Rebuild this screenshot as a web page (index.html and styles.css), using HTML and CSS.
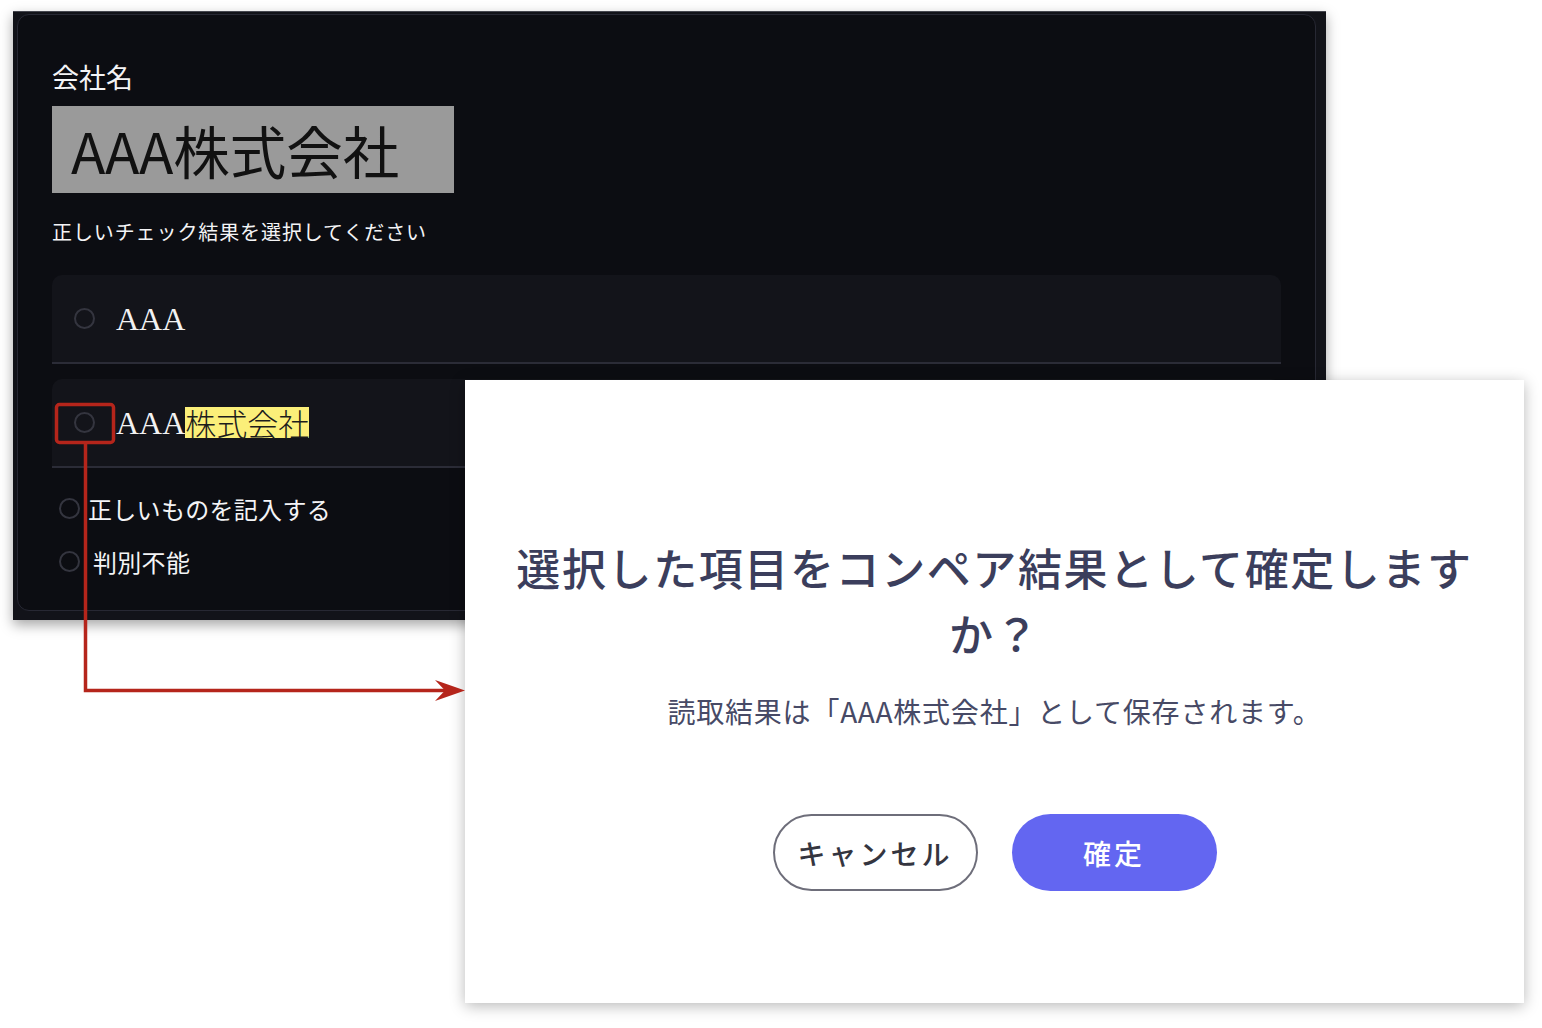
FILE: index.html
```html
<!DOCTYPE html>
<html lang="ja">
<head>
    <meta charset="UTF-8">
    <meta name="viewport" content="width=device-width, initial-scale=1.0">
    <title>コンペア結果の確定</title>
    <link rel="stylesheet" href="styles.css">
</head>
<body>
    <div class="canvas">
        <!-- チェック画面 -->
        <div class="panel">
            <div class="panel-inner">
                <p class="field-label">会社名</p>
                <div class="scan">AAA株式会社</div>
                <p class="hint">正しいチェック結果を選択してください</p>

                <div class="option">
                    <span class="radio"></span>
                    <span class="option-text">AAA</span>
                </div>
                <div class="option option-second">
                    <span class="radio"></span>
                    <span class="option-text">AAA<mark class="diff">株式会社</mark></span>
                </div>

                <div class="choice choice-first">
                    <span class="radio"></span>
                    <span>正しいものを記入する</span>
                </div>
                <div class="choice choice-second">
                    <span class="radio"></span>
                    <span class="choice-spaced">判別不能</span>
                </div>
            </div>
        </div>

        <!-- 確認モーダル -->
        <div class="modal">
            <h1 class="modal-title">選択した項目をコンペア結果として確定しますか？</h1>
            <p class="modal-text">読取結果は「AAA株式会社」として保存されます。</p>
            <div class="modal-buttons">
                <button class="btn btn-cancel">キャンセル</button>
                <button class="btn btn-ok">確定</button>
            </div>
        </div>

        <!-- 注釈 -->
        <svg class="note" width="1542" height="1028" viewBox="0 0 1542 1028">
            <rect x="56.5" y="404.5" width="57" height="38" rx="3" fill="none" stroke="#b5251b" stroke-width="3.5"/>
            <path d="M85.5 444 V690.5 H446" fill="none" stroke="#b5251b" stroke-width="3.5"/>
            <path d="M465 690.5 L435 680 L445 690.5 L435 701 Z" fill="#b5251b"/>
        </svg>
    </div>
</body>
</html>
```

FILE: styles.css
```css
* {
    box-sizing: border-box;
    margin: 0;
    padding: 0;
}

body {
    background: #ffffff;
    font-family: "Noto Sans CJK JP", "Noto Sans", sans-serif;
}

.canvas {
    position: relative;
    width: 1542px;
    height: 1028px;
    overflow: hidden;
}

/* 暗い画面 */
.panel {
    position: absolute;
    left: 13px;
    top: 11px;
    width: 1313px;
    height: 609px;
    background: #121319;
    border-top: 1px solid #45464e;
    padding: 2px 10px 9px 4px;
    box-shadow: 0 5px 12px rgba(0, 0, 0, 0.35);
}

.panel-inner {
    height: 100%;
    background: #0c0d12;
    border: 1px solid #272833;
    border-radius: 12px;
    padding: 44px 34px 0 34px;
    color: #f4f4f6;
}

.field-label {
    font-size: 27px;
    line-height: 36px;
}

.scan {
    margin-top: 11px;
    width: 402px;
    height: 87px;
    background: #9a9a9a;
    color: #111111;
    font-size: 56.5px;
    line-height: 87px;
    padding-left: 19px;
}

.hint {
    margin-top: 25px;
    font-size: 20px;
    line-height: 28px;
    letter-spacing: 0.9px;
}

.option {
    display: flex;
    align-items: center;
    margin-top: 29px;
    height: 89px;
    padding-left: 22px;
    background: #13141a;
    border-radius: 10px 10px 0 0;
    border-bottom: 2px solid #2b2c37;
}

.option-second {
    margin-top: 15px;
}

.radio {
    flex: none;
    width: 21px;
    height: 21px;
    border: 2px solid #34353f;
    border-radius: 50%;
}

.option-text {
    display: flex;
    align-items: center;
    margin-left: 21px;
    font-family: "Liberation Serif", "Noto Sans CJK JP", serif;
    font-size: 32px;
    line-height: 36px;
    color: #f2f2f2;
}

.diff {
    display: inline-block;
    height: 31px;
    line-height: 31px;
    background: #fbef79;
    color: #1c1c1c;
    font-family: "Noto Sans CJK JP", sans-serif;
    font-size: 31px;
    font-weight: 300;
}

.choice {
    display: flex;
    align-items: center;
    gap: 8px;
    height: 32px;
    padding-left: 7px;
    font-size: 24px;
    letter-spacing: 0.3px;
}

.choice-first {
    margin-top: 24px;
}

.choice-second {
    margin-top: 21px;
}

.choice-spaced {
    margin-left: 5px;
}

/* モーダル */
.modal {
    position: absolute;
    left: 465px;
    top: 380px;
    width: 1059px;
    height: 623px;
    background: #ffffff;
    box-shadow: 0 3px 14px rgba(0, 0, 0, 0.28);
    display: flex;
    flex-direction: column;
    align-items: center;
    padding: 154px 45px 0;
    text-align: center;
}

.modal-title {
    font-size: 44px;
    line-height: 66px;
    font-weight: 500;
    letter-spacing: 1.6px;
    color: #3b3e5c;
}

.modal-text {
    margin-top: 25px;
    font-size: 28px;
    line-height: 40px;
    letter-spacing: 0.8px;
    color: #474a66;
}

.modal-buttons {
    display: flex;
    gap: 34px;
    margin-top: 83px;
}

.btn {
    width: 205px;
    height: 77px;
    border-radius: 39px;
    font-family: "Noto Sans CJK JP", sans-serif;
    font-size: 28px;
    font-weight: 500;
    letter-spacing: 3px;
    cursor: pointer;
}

.btn-cancel {
    background: #ffffff;
    border: 2px solid #6e6e7a;
    color: #34353f;
}

.btn-ok {
    background: #6366f1;
    border: none;
    color: #ffffff;
}

.note {
    position: absolute;
    left: 0;
    top: 0;
    pointer-events: none;
}
```
